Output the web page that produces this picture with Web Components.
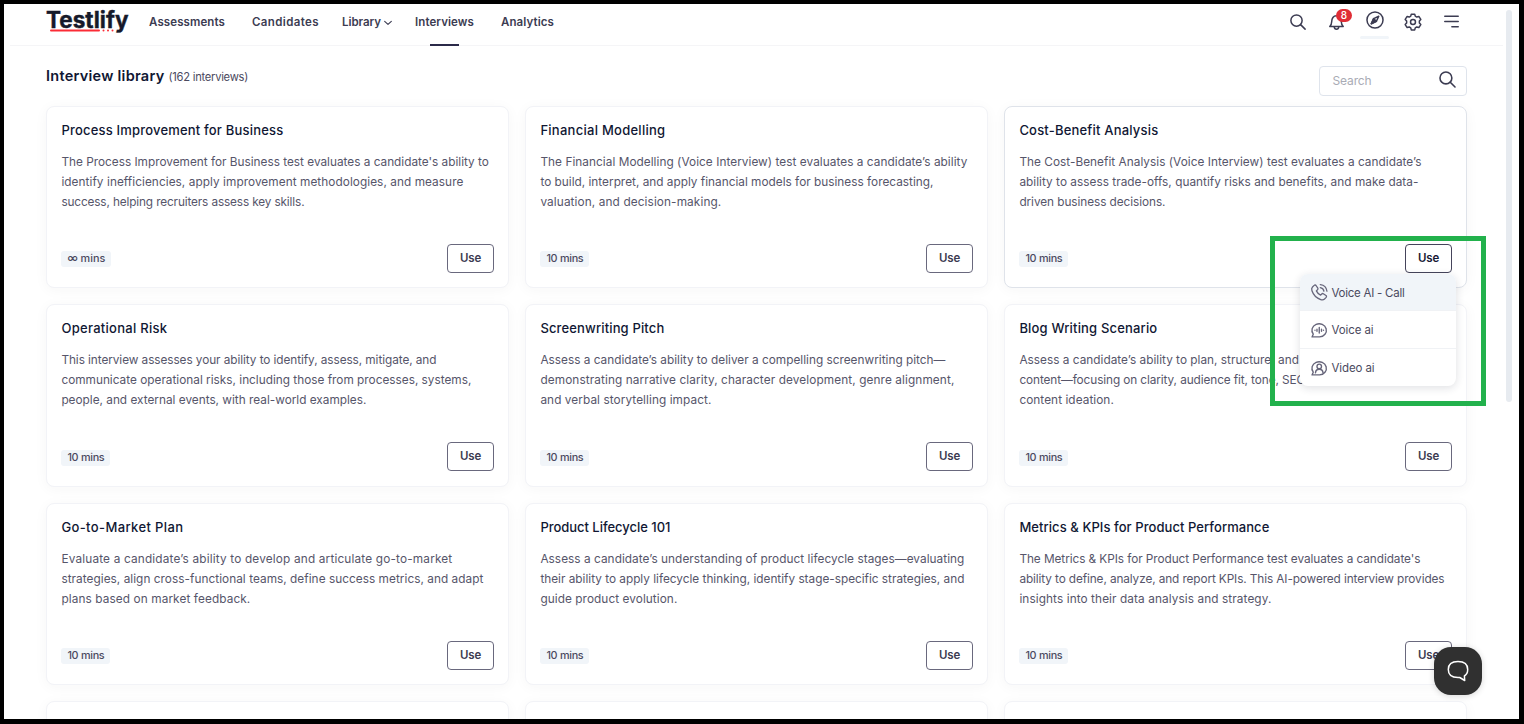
<!DOCTYPE html>
<html lang="en">
<head>
<meta charset="utf-8">
<title>Interview library</title>
<style>
  html, body {
    margin: 0;
    padding: 0;
  }
  body {
    width: 1524px;
    height: 724px;
    overflow: hidden;
    font-family: Inter, "Open Sans", sans-serif;
    color: #4b4a60;
  }
</style>
</head>
<body>
<interview-page></interview-page>

<script>
const ICONS = {
  search: '<circle cx="10" cy="10" r="7.500"/><path d="M15.500 15.500l6 6"/>',
  bell: '<path d="M2.500 19h19c-1.800-1.700-2.700-3.500-2.700-6.500C18.800 7.500 16.500 4 12 4s-6.800 3.500-6.800 8.500c0 3-.9 4.800-2.700 6.500z"/><path d="M8.800 19.500c.2 2.200 1.500 3.300 3.200 3.300s3-1.100 3.200-3.300"/>',
  compass: '<circle cx="12" cy="12" r="10.700"/><path d="M17 7l-3.200 6.800L7 17l3.200-6.800z"/><path d="M7 17l3.200-6.800 3.600 3.600z" fill="currentColor"/>',
  gear: '<circle cx="12" cy="12" r="3.300"/><path d="M9.700 1.500h4.600l.7 2.700 2 1.200 2.800-.8 2.600 4-1.900 2.200v2.400l1.900 2.200-2.600 4-2.800-.8-2 1.200-.7 2.700H9.700L9 19.800l-2-1.200-2.800.8-2.600-4 1.900-2.200v-2.400L1.600 8.600l2.600-4 2.800.8 2-1.200z"/>',
  menu: '<path d="M2.500 4.500h19M2.500 12h19M12.500 19.500h9"/>',
  chevron: '<path d="M2 7l10 9 10-9"/>',
  call: '<path d="M2.200 4.300L4.600 2c.9-.8 2-.7 2.700.2l2.600 3.900c.5.800.3 1.700-.4 2.300L7.800 10c1.300 2.800 3.300 4.800 6.200 6.200l1.600-1.700c.6-.7 1.500-.9 2.300-.4l3.900 2.600c.9.700 1 1.800.2 2.700l-2.300 2.400c-1.400 1.300-3.500 1.500-5.500.8C7.700 20.400 3.600 16.300 1.400 9.800c-.7-2-.5-4.100.8-5.500z"/><path d="M13.500 5.200c3 .5 4.800 2.300 5.300 5.300M13.500 .800c5.500.6 9.100 4.200 9.700 9.700"/>',
  voice: '<path d="M1.500 21.700l1.800-4A10.500 9.600 0 1 1 12.500 21.700z"/><path d="M12 8v8M8.700 10.500v3M15.300 10.500v3M5.800 11.900v.2M18.200 11.900v.2"/>',
  video: '<path d="M1.500 21.700l1.800-4A10.500 9.600 0 1 1 12.500 21.700z"/><circle cx="12" cy="9.300" r="3.300"/><path d="M6.500 18.700c.3-3.800 2.300-5.200 5.500-5.200s5.200 1.400 5.500 5.200"/>',
  chat: '<path d="M12 2.500c6 0 9.700 2.800 9.700 8 0 3-1.200 5.200-3.300 6.500l.3 4.500-5-3H12c-6 0-9.700-2.800-9.700-8s3.700-8 9.700-8z"/>'
};

const ROWS = [
  [
    { title: ['Process Improvement for Business', 222], mins: ['∞ mins', 38], lines: [
      ["The Process Improvement for Business test evaluates a candidate's ability to", 427.5],
      ['identify inefficiencies, apply improvement methodologies, and measure', 402],
      ['success, helping recruiters assess key skills.', 243]] },
    { title: ['Financial Modelling', 125], lines: [
      ['The Financial Modelling (Voice Interview) test evaluates a candidate’s ability', 427],
      ['to build, interpret, and apply financial models for business forecasting,', 393],
      ['valuation, and decision-making.', 181]] },
    { title: ['Cost-Benefit Analysis', 139], active: true, lines: [
      ['The Cost-Benefit Analysis (Voice Interview) test evaluates a candidate’s', 402],
      ['ability to assess trade-offs, quantify risks and benefits, and make data-', 399],
      ['driven business decisions.', 146]] }
  ],
  [
    { title: ['Operational Risk', 106], lines: [
      ['This interview assesses your ability to identify, assess, mitigate, and', 375],
      ['communicate operational risks, including those from processes, systems,', 410],
      ['people, and external events, with real-world examples.', 305]] },
    { title: ['Screenwriting Pitch', 124], lines: [
      ['Assess a candidate’s ability to deliver a compelling screenwriting pitch—', 405],
      ['demonstrating narrative clarity, character development, genre alignment,', 414],
      ['and verbal storytelling impact.', 171]] },
    { title: ['Blog Writing Scenario', 138], lines: [
      ['Assess a candidate’s ability to plan, structure, and', 279.5],
      ['content—focusing on clarity, audience fit, tone, SEO', 286],
      ['content ideation.', 94.5]] }
  ],
  [
    { title: ['Go-to-Market Plan', 122], lines: [
      ['Evaluate a candidate’s ability to develop and articulate go-to-market', 391],
      ['strategies, align cross-functional teams, define success metrics, and adapt', 422],
      ['plans based on market feedback.', 189]] },
    { title: ['Product Lifecycle 101', 130], lines: [
      ['Assess a candidate’s understanding of product lifecycle stages—evaluating', 424],
      ['their ability to apply lifecycle thinking, identify stage-specific strategies, and', 424],
      ['guide product evolution.', 137]] },
    { title: ['Metrics & KPIs for Product Performance', 250], lines: [
      ["The Metrics & KPIs for Product Performance test evaluates a candidate's", 401],
      ['ability to define, analyze, and report KPIs. This AI-powered interview provides', 425],
      ['insights into their data analysis and strategy.', 252]] }
  ]
];

// One line of text tracked so that it fills the given width
class FitText extends HTMLElement {
  constructor() {
    super();
    this.attachShadow({ mode: 'open' }).innerHTML = `
      <style>
        :host { display: inline-block; white-space: nowrap; width: var(--w); }
      </style>
      <span><slot></slot></span>`;
  }
  connectedCallback() {
    const w = parseFloat(this.getAttribute('w'));
    const span = this.shadowRoot.querySelector('span');
    this.style.setProperty('--w', w + 'px');
    const n = this.textContent.length;
    const natural = span.getBoundingClientRect().width;
    span.style.letterSpacing = ((w - natural) / n).toFixed(3) + 'px';
  }
}

class UiIcon extends HTMLElement {
  connectedCallback() {
    const s = this.getAttribute('size') || 18;
    this.attachShadow({ mode: 'open' }).innerHTML = `
      <style>
        :host { display: block; flex: none; width: ${s}px; height: ${s}px; }
        svg { display: block; overflow: visible; }
      </style>
      <svg width="${s}" height="${s}" viewBox="0 0 24 24" fill="none" stroke="currentColor"
        stroke-width="${this.getAttribute('stroke') || 2}" stroke-linecap="round" stroke-linejoin="round">${ICONS[this.getAttribute('name')]}</svg>`;
  }
}

class BrandLogo extends HTMLElement {
  constructor() {
    super();
    this.attachShadow({ mode: 'open' }).innerHTML = `
      <style>
        :host { display: block; position: relative; width: 83px; height: 31px;
          font: 700 22.500px/24px Inter, sans-serif; color: #15192a; -webkit-text-stroke: .4px #15192a; }
        .rule { position: absolute; left: 4px; top: 21px; }
      </style>
      <fit-text w="82.500">Testlify</fit-text>
      <svg class="rule" width="66" height="3"><path d="M1 1.500h48" stroke="#fb2c36" stroke-width="2" stroke-linecap="round"/>
        <g fill="#fb2c36"><circle cx="53.500" cy="1.500" r="1"/><circle cx="58" cy="1.500" r="1"/><circle cx="62.500" cy="1.500" r="1"/></g></svg>`;
  }
}

class TopNav extends HTMLElement {
  constructor() {
    super();
    this.attachShadow({ mode: 'open' }).innerHTML = `
      <style>
        :host { display: flex; box-sizing: border-box; height: 42px; margin: 0 16px 0 6px; padding: 0 36px;
          border-bottom: 1px solid #f5f5f7; color: #3c3c52; }
        brand-logo { margin-top: 4px; }
        nav { display: flex; gap: 27px; margin-left: 20px; font-size: 11.5px; font-weight: 600; line-height: 36px; }
        nav div { display: flex; position: relative; }
        nav div:nth-child(3) { margin-left: -4px; }
        nav ui-icon { margin: 15px -4px 0 3px; }
        nav .on::after { content: ""; position: absolute; left: 15px; top: 40px; width: 29px; height: 2px; background: #2b2a49; }
        .tools { display: flex; margin-left: auto; }
        .tools > * { position: relative; }
        .badge { position: absolute; left: 8px; top: -4px; width: 16px; height: 13px; border-radius: 7px;
          background: #e02d35; color: #fff; font: 500 10px/13px Inter, sans-serif; text-align: center; }
        .under { position: absolute; left: -6px; top: 25px; width: 29px; height: 3px; border-radius: 2px; background: #f1f5f9; }
      </style>
      <brand-logo></brand-logo>
      <nav>
        <div><fit-text w="76">Assessments</fit-text></div>
        <div><fit-text w="67">Candidates</fit-text></div>
        <div><fit-text w="39">Library</fit-text><ui-icon name="chevron" size="8" stroke="3.400"></ui-icon></div>
        <div class="on"><fit-text w="59">Interviews</fit-text></div>
        <div><fit-text w="53">Analytics</fit-text></div>
      </nav>
      <div class="tools">
        <ui-icon name="search" size="18" style="margin:9px 21px 0 0"></ui-icon>
        <div style="margin:9px 21px 0 0"><ui-icon name="bell" size="17" stroke="2.100"></ui-icon><span class="badge">8</span></div>
        <div style="margin:7px 20px 0 0"><ui-icon name="compass" size="18"></ui-icon><span class="under"></span></div>
        <ui-icon name="gear" size="18" style="margin:9px 21px 0 0"></ui-icon>
        <ui-icon name="menu" size="17" stroke="2.100" style="margin:9px 7px 0 0"></ui-icon>
      </div>`;
  }
}

class SearchBox extends HTMLElement {
  constructor() {
    super();
    this.attachShadow({ mode: 'open' }).innerHTML = `
      <style>
        :host { display: flex; justify-content: space-between; box-sizing: border-box; width: 148px; height: 30px;
          padding: 0 9px 0 12.500px; border: 1px solid #dfe4ec; border-radius: 4px; background: #fff;
          font-size: 12px; line-height: 28px; color: #a9abb5; }
        ui-icon { margin-top: 3px; color: #3c3c52; }
      </style>
      <fit-text w="39">Search</fit-text>
      <ui-icon name="search" size="19"></ui-icon>`;
  }
}

class UseMenu extends HTMLElement {
  constructor() {
    super();
    this.attachShadow({ mode: 'open' }).innerHTML = `
      <style>
        :host { display: block; width: 156px; border-radius: 8px; overflow: hidden; background: #fff;
          box-shadow: 0 2px 8px rgba(30, 35, 60, .14); font-size: 11.5px; color: #4b4a60; }
        div { display: flex; align-items: center; gap: 4px; box-sizing: border-box; height: 37.400px; padding: 1px 0 0 11px;
          border-bottom: 1px solid #f0f2f5; }
        div:first-of-type { background: #f1f5f9; }
        div:last-of-type { border: 0; }
        ui-icon { color: #67667b; }
      </style>
      <div><ui-icon name="call" size="16.500" stroke="1.900"></ui-icon><fit-text w="73">Voice AI - Call</fit-text></div>
      <div><ui-icon name="voice" size="16.500" stroke="2"></ui-icon><fit-text w="42">Voice ai</fit-text></div>
      <div><ui-icon name="video" size="16.500" stroke="2"></ui-icon><fit-text w="43">Video ai</fit-text></div>`;
  }
}

class InterviewCard extends HTMLElement {
  constructor() {
    super();
    this.attachShadow({ mode: 'open' }).innerHTML = `
      <style>
        :host { display: flex; flex-direction: column; box-sizing: border-box; height: 182.400px; padding: 13px 14px 14.500px 14.400px;
          border: 1px solid #f2f3f7; border-radius: 8px; background: #fff; box-shadow: 0 2px 14px rgba(40, 40, 60, .04); }
        :host([active]) { border-color: #dfe3ea; }
        .title { height: 20px; font-size: 13px; font-weight: 500; line-height: 20px; color: #101733; }
        .text { display: flex; flex-direction: column; margin-top: 12px; font-size: 11.800px; line-height: 20px; color: #56556a; }
        .foot { display: flex; align-items: center; justify-content: space-between; margin-top: auto; }
        .mins { margin-top: 2px; padding: 0 6px; border-radius: 3px; background: #f1f5f9; font-size: 10.800px; font-weight: 500; line-height: 16px; color: #4b4a60; }
        .mins fit-text { vertical-align: top; }
        .use { box-sizing: border-box; width: 47px; height: 29px; padding: 0 12px; border: 1px solid #69687d; border-radius: 4px;
          background: #fff; font-size: 11.500px; font-weight: 600; line-height: 27px; color: #3c3b51; }
        :host([active]) .use { border-color: #45445b; color: #171a35; }
      </style>
      <div class="title"><slot name="title"></slot></div>
      <div class="text"><slot></slot></div>
      <div class="foot">
        <span class="mins"><slot name="mins"></slot></span>
        <div class="use"><fit-text w="21">Use</fit-text></div>
      </div>`;
  }
}

class InterviewGrid extends HTMLElement {
  constructor() {
    super();
    const esc = s => s.replace(/&/g, '&amp;');
    const cards = ROWS.flat().map(c => {
      const mins = c.mins || ['10 mins', 37];
      return `<interview-card${c.active ? ' active' : ''}>
        <fit-text slot="title" w="${c.title[1]}">${esc(c.title[0])}</fit-text>
        ${c.lines.map(l => `<fit-text w="${l[1]}">${esc(l[0])}</fit-text>`).join('')}
        <fit-text slot="mins" w="${mins[1]}">${mins[0]}</fit-text>
      </interview-card>`;
    }).join('');
    this.attachShadow({ mode: 'open' }).innerHTML = `
      <style>
        :host { display: grid; grid-template-columns: repeat(3, 1fr); gap: 16px; }
        .next { height: 60px; border: 1px solid #f2f3f7; border-radius: 8px; background: #fff;
          box-shadow: 0 2px 14px rgba(40, 40, 60, .04); }
      </style>
      ${cards}<div class="next"></div><div class="next"></div><div class="next"></div>`;
  }
}

class InterviewPage extends HTMLElement {
  constructor() {
    super();
    this.attachShadow({ mode: 'open' }).innerHTML = `
      <style>
        :host { display: block; position: relative; box-sizing: border-box; width: 1524px; height: 724px; overflow: hidden;
          border: solid #000; border-width: 4px 5px 5px 4px; background: #fff; }
        .head { display: flex; align-items: flex-start; margin: 0 52px 0 42px; height: 60px; }
        h1 { margin: 20px 4px 0 0; font-size: 14.500px; font-weight: 600; line-height: 20px; color: #101733; }
        .count { margin-top: 21px; font-size: 11.200px; line-height: 20px; }
        search-box { margin: 20px 0 0 auto; }
        interview-grid { margin: 0 52px 0 42px; }
        .bar { position: absolute; left: 1502px; top: 6px; width: 6px; height: 392px; border-radius: 3px; background: #e7ebf0; }
        use-menu { position: absolute; left: 1296px; top: 270px; }
        .mark { position: absolute; left: 1266px; top: 232px; box-sizing: border-box; width: 216px; height: 170px; border: 5px solid #22b14c; }
        .chat { position: absolute; left: 1430px; top: 643px; display: flex; align-items: center; justify-content: center;
          width: 48px; height: 48px; border-radius: 17px; background: #303030; color: #fff; box-shadow: 0 1px 6px rgba(0, 0, 0, .16); }
      </style>
      <top-nav></top-nav>
      <div class="head">
        <h1><fit-text w="118.500">Interview library</fit-text></h1>
        <span class="count"><fit-text w="79.500">(162 interviews)</fit-text></span>
        <search-box></search-box>
      </div>
      <interview-grid></interview-grid>
      <div class="bar"></div>
      <div class="mark"></div>
      <use-menu></use-menu>
      <div class="chat"><ui-icon name="chat" size="24" stroke="1.500"></ui-icon></div>`;
  }
}

customElements.define('fit-text', FitText);
customElements.define('ui-icon', UiIcon);
customElements.define('brand-logo', BrandLogo);
customElements.define('top-nav', TopNav);
customElements.define('search-box', SearchBox);
customElements.define('use-menu', UseMenu);
customElements.define('interview-card', InterviewCard);
customElements.define('interview-grid', InterviewGrid);
customElements.define('interview-page', InterviewPage);
</script>
</body>
</html>
